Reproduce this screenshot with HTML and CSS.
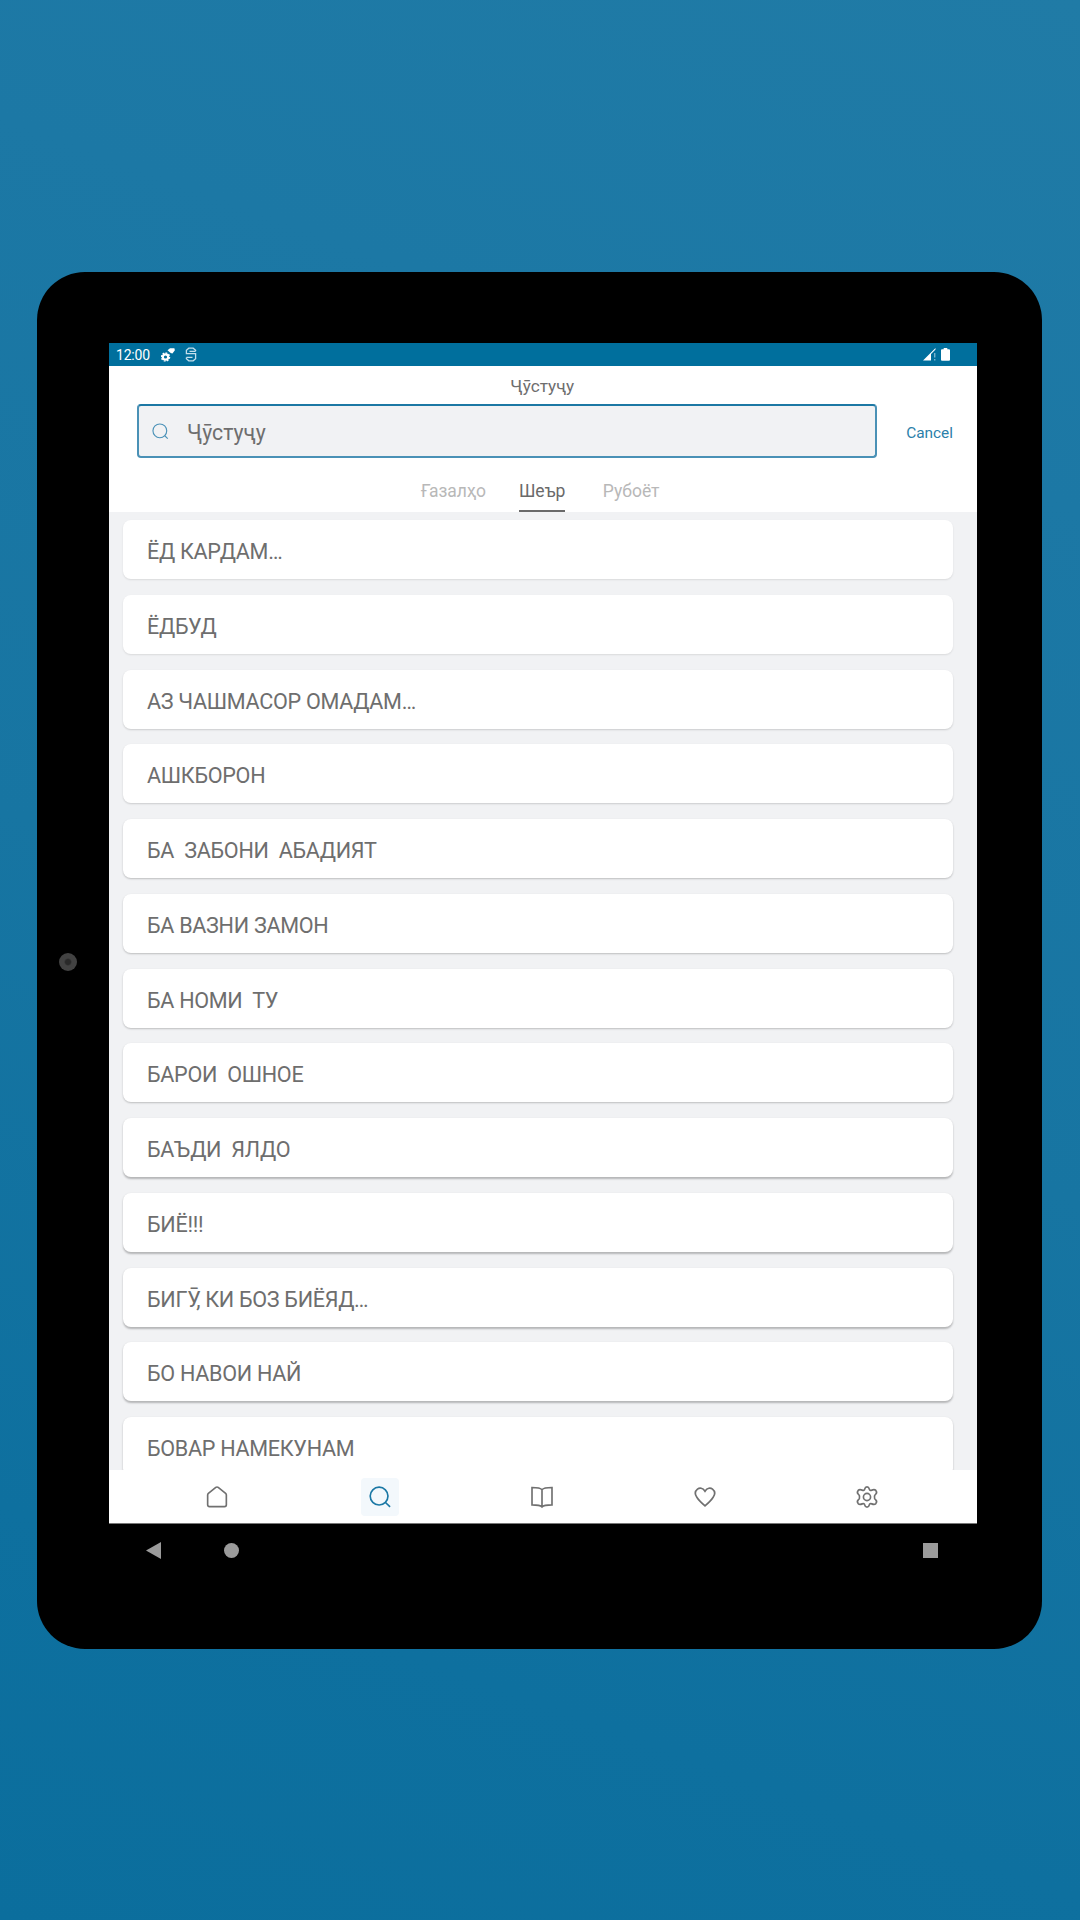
FILE: index.html
```html
<!DOCTYPE html>
<html lang="tg">
<head>
<meta charset="utf-8">
<title>Ҷӯстуҷу</title>
<link rel="stylesheet" href="styles.css">
</head>
<body>
<main class="tablet">
  <span class="camera"></span>
  <section class="screen">
    <header class="status">
      <span class="clock">12:00</span>
      <svg class="gears" viewBox="0 0 14 14"><circle cx="4.500" cy="9" r="2.700" fill="none" stroke="#fff" stroke-width="2.200"/><circle cx="4.500" cy="9" r="4.100" fill="none" stroke="#fff" stroke-width="1.300" stroke-dasharray="1.800 1.340"/><path d="M6.500 2.200 9 .3h4.400l.5 2-2.500 3.200L9.700 5Z" fill="#fff"/></svg>
      <svg class="sync" viewBox="0 0 12 15"><path d="M10.600 4.300V3.200L8.200 1.200H3.800L1.400 3.200v3.400h9.200v5.200l-2.400 2H3.800l-2.400-2v-1.400M4.500 4.300h6.100M1.400 10.400h6.100" fill="none" stroke="#c4dfec" stroke-width="1.300"/></svg>
      <span class="grow"></span>
      <svg class="signal" viewBox="0 0 13 13"><path d="M0 12.500 12.500 0v1.500L8 6v6.500Z" fill="#fff"/><path d="M11.800 5v4.500M11.800 11v1.500" stroke="#a9d0e2" stroke-width="1"/></svg>
      <svg class="battery" viewBox="0 0 9 13"><path d="M2.700 0h3.600v1.200H8q1 0 1 1v9.600q0 1-1 1H1q-1 0-1-1V2.200q0-1 1-1h1.700Z" fill="#fff"/></svg>
    </header>
    <div class="head">
      <h1 class="title">Ҷӯстуҷу</h1>
      <div class="search-row">
        <div class="search">
          <svg class="lens" viewBox="0 0 18 18"><circle cx="8.300" cy="8.300" r="7.300"/><path d="m13.500 13.500 3.200 3"/></svg>
          <span class="query">Ҷӯстуҷу</span>
        </div>
        <span class="cancel">Cancel</span>
      </div>
      <nav class="tabs">
        <span class="tab">Ғазалҳо</span>
        <span class="tab active">Шеър</span>
        <span class="tab last">Рубоёт</span>
      </nav>
    </div>
    <div class="list">
      <div class="card s1">ЁД КАРДАМ…</div>
      <div class="card s1">ЁДБУД</div>
      <div class="card s2">АЗ ЧАШМАСОР ОМАДАМ…</div>
      <div class="card s2">АШКБОРОН</div>
      <div class="card s3">БА  ЗАБОНИ  АБАДИЯТ</div>
      <div class="card s3">БА ВАЗНИ ЗАМОН</div>
      <div class="card s3">БА НОМИ  ТУ</div>
      <div class="card s3">БАРОИ  ОШНОЕ</div>
      <div class="card s4">БАЪДИ  ЯЛДО</div>
      <div class="card s4">БИЁ!!!</div>
      <div class="card s4">БИГӮ, КИ БОЗ БИЁЯД…</div>
      <div class="card s4">БО НАВОИ НАЙ</div>
      <div class="card s4">БОВАР НАМЕКУНАМ</div>
    </div>
    <nav class="bottom">
      <span class="item"><svg viewBox="0 0 24 24"><path d="M1.800 9.800q0-1 .8-1.700L10.700 1.600q1.300-1 2.600 0l8.100 6.500q.8.700.8 1.700v10.700q0 2-2 2H3.800q-2 0-2-2Z"/></svg></span>
      <span class="item on"><svg viewBox="0 0 24 24"><circle cx="11" cy="11" r="9.700"/><path d="m18 18 5 4.800"/></svg></span>
      <span class="item"><svg viewBox="0 0 24 24"><path d="M12 4Q10 1.600 1.100 1.600v19q8.900 0 10.900 2.200 2-2.200 10.900-2.200v-19Q14 1.600 12 4v18.800"/></svg></span>
      <span class="item"><svg viewBox="0 0 24 24"><path d="M12 5.700C9.500 1.700 6 1.700 3.800 3.400 1 5.700 1 9.300 3.100 12.300 5.100 15.500 8.500 18.700 12 21.700c3.500-3 6.900-6.200 8.900-9.400 2.100-3 2.100-6.600-.7-8.900C18 1.700 14.500 1.700 12 5.700Z"/></svg></span>
      <span class="item"><svg viewBox="0 0 24 24"><circle cx="12" cy="12" r="3.900"/><path d="M9.600 3.100q.4-2.200 2.400-2.200t2.400 2.200q.5 2.200 2.800 1.400 3-1.200 4.400.3 1.800 2.200-.1 4-1.700 1.200-1.300 3.200-.4 2 1.300 3.200 1.900 1.800.1 4-1.400 1.500-4.400.3-2.300-.8-2.800 1.400-.4 2.200-2.400 2.200t-2.400-2.200q-.5-2.200-2.800-1.400-3 1.200-4.400-.3-1.800-2.200.1-4 1.700-1.200 1.300-3.200.4-2-1.300-3.200-1.900-1.800-.1-4 1.400-1.500 4.400-.3 2.300.8 2.800-1.400Z"/></svg></span>
    </nav>
  </section>
  <footer class="android">
    <svg class="back" viewBox="0 0 15 17"><path d="M0 8.500 15 0v17Z"/></svg>
    <span class="home"></span>
    <span class="recent"></span>
  </footer>
</main>
</body>
</html>
```
FILE: styles.css
```css
* { box-sizing: border-box; }
body {
  margin: 0;
  width: 1080px;
  height: 1920px;
  padding: 272px 38px 0 37px;
  overflow: hidden;
  background: linear-gradient(200deg, #207ba6 0%, #1c78a5 22%, #1775a2 52%, #0e709f 82%, #0b6e9d 100%);
  font-family: Roboto, "Noto Sans", sans-serif;
  color: #6e6e6e;
}
.tablet {
  position: relative;
  height: 1377px;
  padding: 71px 65px 0 71.500px;
  border-radius: 48px;
  background: #000;
}
.camera {
  position: absolute;
  left: 22px;
  top: 681px;
  width: 18px;
  height: 18px;
  border-radius: 50%;
  background: radial-gradient(circle, #292929 2.500px, #424242 4px);
}
.screen {
  height: 1181px;
  display: flex;
  flex-direction: column;
  overflow: hidden;
  background: #f1f2f4;
}
.status {
  flex: none;
  height: 22.500px;
  display: flex;
  align-items: center;
  padding: 1px 27px 0 7.500px;
  background: #006f9d;
  color: #fff;
}
.clock { width: 44.500px; font-size: 14px; letter-spacing: -.2px; line-height: 22px; }
.gears { width: 14px; height: 14px; }
.sync { width: 12px; height: 15px; margin-left: 10.500px; }
.grow { flex: 1; }
.signal { width: 13px; height: 13px; margin-right: 5px; }
.battery { width: 9px; height: 13px; }
.head { flex: none; height: 146.500px; background: #fff; }
.title {
  margin: 0;
  height: 38.500px;
  padding-right: 1px;
  line-height: 41px;
  text-align: center;
  font-size: 17.200px;
  font-weight: 400;
}
.search-row { display: flex; align-items: center; padding: 0 24px 0 28.500px; }
.search {
  width: 740px;
  height: 54px;
  display: flex;
  align-items: center;
  padding-left: 13px;
  border: 2px solid #4a91b6;
  border-top-color: #1c78a4;
  border-radius: 4px;
  background: #f1f2f4;
}
.lens { width: 17px; height: 17px; fill: none; stroke: #4b92b8; stroke-width: 1.200; }
.query { margin-left: 18px; padding-top: 2px; font-size: 21.200px; }
.cancel { flex: 1; padding-top: 3px; text-align: right; font-size: 15.400px; color: #2b80aa; }
.tabs { height: 54px; display: flex; gap: 33px; padding-left: 312.500px; }
.tab { height: 54px; line-height: 66px; font-size: 17.500px; color: #b8b8b8; }
.tab.active { color: #6a6a6a; border-bottom: 2px solid #6a6a6a; }
.tab.last { margin-left: 4.500px; }
.list {
  flex: 1;
  min-height: 0;
  overflow: hidden;
  display: flex;
  flex-direction: column;
  gap: 15.780px;
  padding: 8px 24px 0 14.500px;
}
.card {
  flex: none;
  height: 59px;
  padding-left: 24px;
  border-radius: 8px;
  background: #fff;
  font-size: 21.600px;
  letter-spacing: -.3px;
  line-height: 63px;
  white-space: pre;
}
.s1 { box-shadow: 0 1px 2px rgba(0,0,0,.1); }
.s2 { box-shadow: 0 1px 2px rgba(0,0,0,.16); }
.s3 { box-shadow: 0 1px 2px rgba(0,0,0,.22); }
.s4 { box-shadow: 0 1.500px 2px rgba(0,0,0,.25); }
.bottom {
  flex: none;
  height: 54px;
  display: flex;
  align-items: center;
  justify-content: space-around;
  padding: 0 28.500px 0 27.500px;
  border-bottom: 1px solid #777;
  background: #fff;
}
.item {
  width: 38px;
  height: 38px;
  display: grid;
  place-items: center;
  border-radius: 4px;
}
.item.on { background: #f3f8fc; }
.item svg { width: 22px; height: 22px; fill: none; stroke: #707070; stroke-width: 1.800; overflow: visible; }
.item.on svg { stroke: #1b78a5; }
.android {
  height: 52px;
  display: flex;
  align-items: center;
  padding: 0 39.500px 0 37.500px;
}
.back { width: 15px; height: 17px; fill: #9b9b9b; }
.home { width: 15px; height: 15px; margin-left: 63px; border-radius: 50%; background: #9b9b9b; }
.recent { width: 15px; height: 15px; margin-left: auto; background: #9b9b9b; }
```
